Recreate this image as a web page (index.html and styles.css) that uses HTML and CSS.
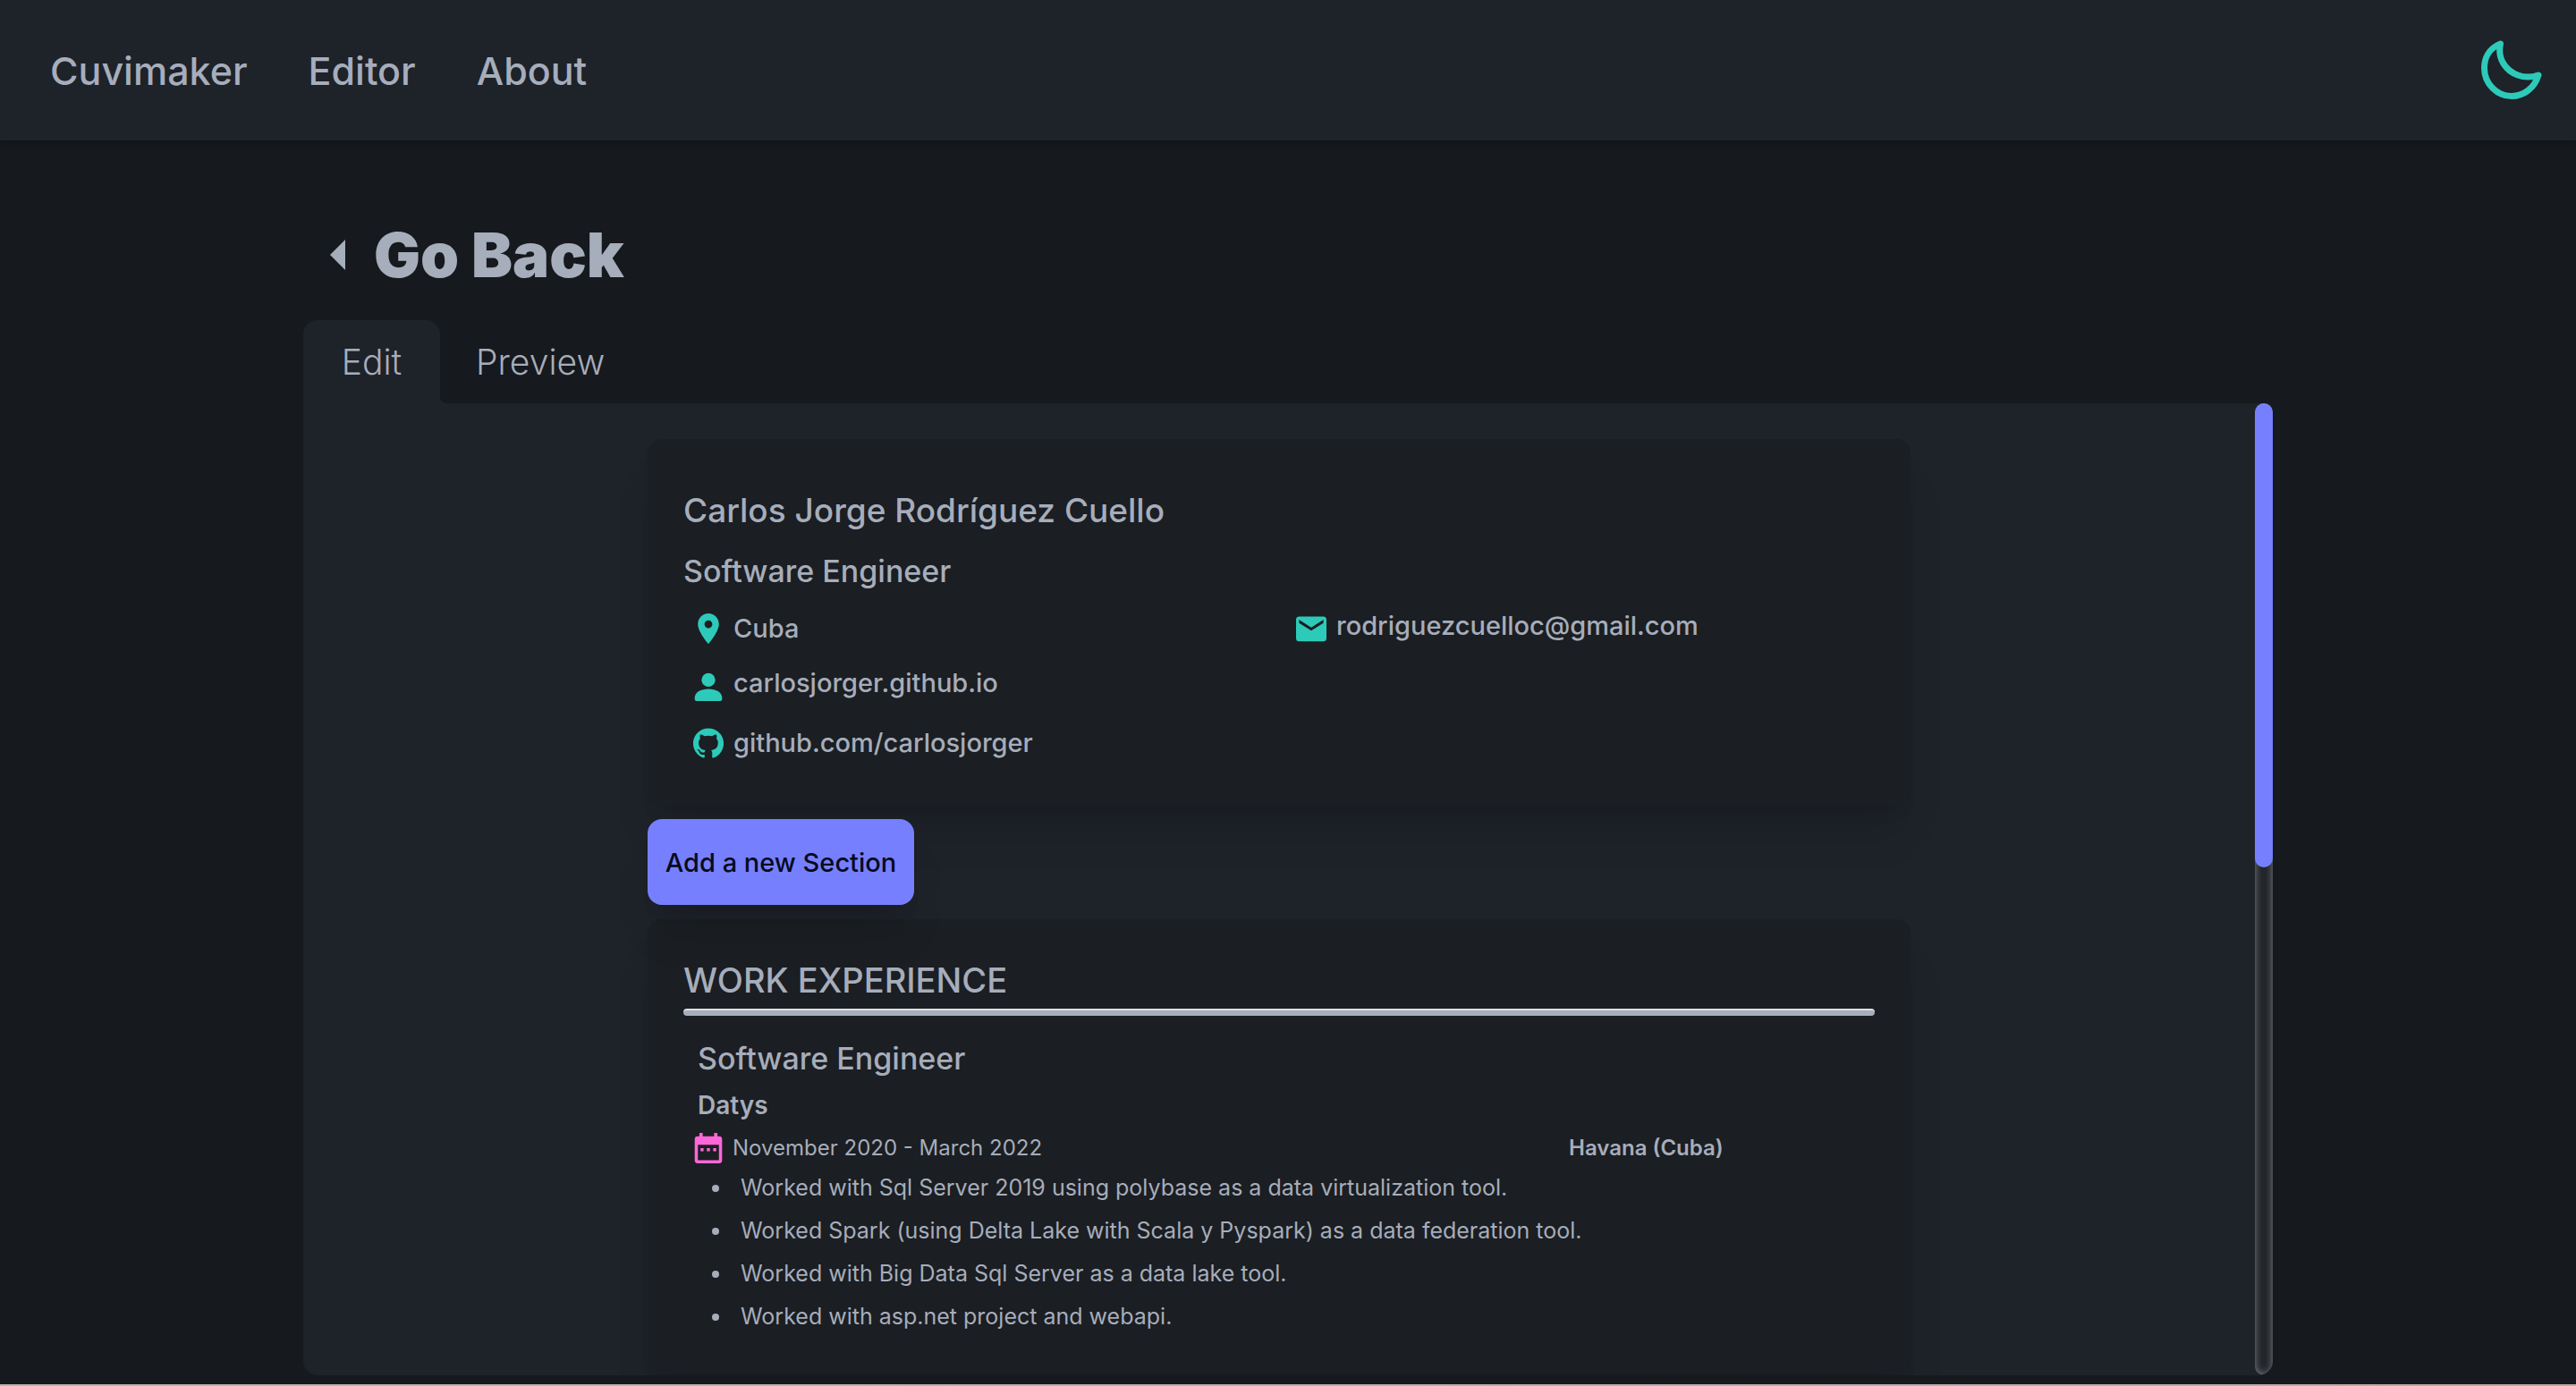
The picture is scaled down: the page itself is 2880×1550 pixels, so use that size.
FILE: index.html
```html
<!DOCTYPE html>
<html lang="en">
<head>
<meta charset="utf-8">
<title>Cuvimaker - Editor</title>
<meta name="viewport" content="width=device-width, initial-scale=1">
<link rel="stylesheet" href="styles.css">
</head>
<body>
<header class="navbar">
  <nav class="nav-links">
    <a href="#home">Cuvimaker</a>
    <a href="#editor">Editor</a>
    <a href="#about">About</a>
  </nav>
  <button class="theme-toggle" type="button" aria-label="Toggle theme">
    <svg viewBox="0 0 68 68" fill="none" stroke="currentColor" stroke-width="7" stroke-linejoin="round" stroke-linecap="round"><path d="M21.500 4C8 9.500 3.500 21 3.500 31C3.500 49 18 62.500 34 62.500C47 62.500 59.500 54 64 39C47 45 32 37 25.500 27C20.500 19.500 20 11 21.500 4Z"/></svg>
  </button>
</header>

<main class="page">
  <a class="back" href="#back">
    <svg class="back-arrow" viewBox="0 0 17 34" fill="currentColor"><path d="M0 17L17 0V34Z"/></svg>
    <h1>Go Back</h1>
  </a>

  <div class="tabs" role="tablist">
    <button class="tab tab-active" type="button" role="tab" aria-selected="true">Edit</button>
    <button class="tab" type="button" role="tab" aria-selected="false">Preview</button>
  </div>

  <div class="panel">
    <div class="content">
      <section class="card profile">
        <h2 class="title">Carlos Jorge Rodríguez Cuello</h2>
        <h3 class="subtitle">Software Engineer</h3>
        <div class="contacts">
          <div class="contact">
            <svg class="icon" viewBox="0 0 24 24"><path d="M12 0C7.400 0 3.700 3.700 3.700 8.400C3.700 14.600 12 24 12 24S20.300 14.600 20.300 8.400C20.300 3.700 16.600 0 12 0ZM12 11.600A3.100 3.100 0 1 1 12 5.400A3.100 3.100 0 0 1 12 11.600Z"/></svg>
            <span>Cuba</span>
          </div>
          <div class="contact">
            <svg class="icon" viewBox="0 0 24 24"><path fill-rule="evenodd" d="M2.500 2.500H21.500Q24 2.500 24 5V19.500Q24 22 21.500 22H2.500Q0 22 0 19.500V5Q0 2.500 2.500 2.500ZM2.400 5V7.500L12 13.600L21.600 7.500V5L12 11.200Z"/></svg>
            <span class="raised">rodriguezcuelloc@gmail.com</span>
          </div>
          <div class="contact">
            <svg class="icon" viewBox="0 0 24 24"><circle cx="12" cy="7.300" r="5.400"/><path d="M1.200 22.500V21.500C1.200 17 6 14.500 12 14.500S22.800 17 22.800 21.500V22.500Q22.800 24 21.300 24H2.700Q1.200 24 1.200 22.500Z"/></svg>
            <a class="raised" href="https://carlosjorger.github.io">carlosjorger.github.io</a>
          </div>
          <div class="contact contact-last">
            <svg class="icon" viewBox="0 0 24 24"><path d="M12 .3a12 12 0 0 0-3.800 23.400c.6.1.8-.3.8-.6v-2c-3.300.7-4-1.600-4-1.600-.6-1.400-1.400-1.800-1.400-1.800-1-.7.1-.7.1-.7 1.200 0 1.900 1.200 1.900 1.200 1 1.800 2.800 1.300 3.500 1 0-.8.400-1.300.7-1.600-2.700-.3-5.500-1.300-5.500-6 0-1.200.5-2.300 1.300-3.100-.2-.4-.6-1.600 0-3.200 0 0 1-.3 3.400 1.200a11.500 11.500 0 0 1 6 0c2.300-1.500 3.300-1.200 3.300-1.200.6 1.600.2 2.800 0 3.200.9.800 1.300 1.900 1.300 3.200 0 4.600-2.800 5.600-5.500 5.900.5.400.9 1 .9 2.200v3.300c0 .3.100.7.800.6A12 12 0 0 0 12 .3"/></svg>
            <a href="https://github.com/carlosjorger">github.com/carlosjorger</a>
          </div>
        </div>
      </section>

      <button class="add-section" type="button">Add a new Section</button>

      <section class="card work">
        <h2 class="title">WORK EXPERIENCE</h2>
        <div class="rule"></div>
        <article class="job">
          <h3 class="subtitle">Software Engineer</h3>
          <h4 class="company">Datys</h4>
          <div class="job-meta">
            <svg class="icon icon-calendar" viewBox="0 0 24 24"><path fill-rule="evenodd" d="M4.900 0H7.500V2.600H16.500V0H19.100V2.600H20.500Q22.800 2.600 22.800 5V21.600Q22.800 24 20.500 24H3.500Q1.200 24 1.200 21.600V5Q1.200 2.600 3.500 2.600H4.900ZM3.700 9.300V21.500H20.300V9.300ZM5.800 12H8.200V14.400H5.800ZM10.800 12H13.200V14.400H10.800ZM15.800 12H18.200V14.400H15.800Z"/></svg>
            <span>November 2020 - March 2022</span>
            <strong>Havana (Cuba)</strong>
          </div>
          <ul class="tasks">
            <li>Worked with Sql Server 2019 using polybase as a data virtualization tool.</li>
            <li>Worked Spark (using Delta Lake with Scala y Pyspark) as a data federation tool.</li>
            <li>Worked with Big Data Sql Server as a data lake tool.</li>
            <li>Worked with asp.net project and webapi.</li>
          </ul>
        </article>
      </section>
    </div>
    <div class="scroll-track"><div class="scroll-thumb"></div></div>
  </div>
</main>
<div class="bottom-edge"></div>
</body>
</html>
```
FILE: styles.css
```css
* {
  box-sizing: border-box;
}

html {
  height: 100%;
}

body {
  margin: 0;
  height: 100%;
  display: flex;
  flex-direction: column;
  overflow: hidden;
  background: #16191d;
  color: #a6adbb;
  font-family: Inter, "Open Sans", sans-serif;
  font-size: 24px;
}

h1, h2, h3, h4 {
  margin: 0;
}

a {
  color: inherit;
  text-decoration: none;
}

button {
  border: 0;
  padding: 0;
  background: none;
  color: inherit;
  font: inherit;
  cursor: pointer;
}

.navbar {
  flex: none;
  height: 157px;
  padding: 0 38px 0 56px;
  display: flex;
  align-items: center;
  justify-content: space-between;
  background: #1e2229;
  box-shadow: 0 2px 8px rgba(0, 0, 0, 0.3);
}

.nav-links {
  display: flex;
  gap: 68px;
  font-size: 43px;
  font-weight: 500;
  line-height: 56px;
}

.theme-toggle {
  width: 68px;
  height: 68px;
  color: #2dcab9;
}

.theme-toggle svg {
  display: block;
}

.page {
  flex: 1;
  min-height: 0;
  width: 100%;
  max-width: 2202px;
  margin: 0 auto;
  padding: 88px 0 10px;
  display: flex;
  flex-direction: column;
}

.back {
  align-self: flex-start;
  display: flex;
  align-items: center;
  gap: 32px;
  padding-left: 30px;
}

.back-arrow {
  width: 17px;
  height: 34px;
}

.back h1 {
  font-size: 69px;
  font-weight: 900;
  line-height: 80px;
}

.tabs {
  display: flex;
  flex: none;
  margin-top: 33px;
}

.tab {
  position: relative;
  min-width: 153px;
  height: 93px;
  padding: 0 40px;
  font-size: 39px;
  font-weight: 300;
}

.tab-active {
  border-radius: 16px 16px 0 0;
  background: #1e2229;
}

.tab-active::after {
  content: "";
  position: absolute;
  left: 100%;
  bottom: 0;
  width: 8px;
  height: 8px;
  background: radial-gradient(circle at 100% 0, transparent 8px, #1e2229 8px);
}

.panel {
  flex: 1;
  min-height: 0;
  display: flex;
  overflow: hidden;
  border-radius: 0 8px 16px 16px;
  background: #1e2229;
}

.content {
  flex: 1;
  overflow: hidden;
  padding: 40px 385px 0;
}

.card {
  padding: 40px;
  border-radius: 16px;
  background: #1b1e22;
  box-shadow: 0 40px 50px -10px rgba(0, 0, 0, 0.1), 0 16px 20px -12px rgba(0, 0, 0, 0.1);
}

.title {
  font-size: 37px;
  font-weight: 500;
  line-height: 56px;
}

.work .title {
  font-size: 38px;
}

.subtitle {
  font-size: 34px;
  font-weight: 500;
  line-height: 48px;
}

.profile {
  height: 409px;
  padding-top: 52px;
}

.profile .subtitle {
  margin-top: 16px;
}

.contacts {
  display: grid;
  grid-template-columns: 674px 1fr;
  grid-auto-rows: 64px;
  padding: 8px 0 0 11px;
}

.contact {
  display: flex;
  align-items: center;
  gap: 11px;
  font-size: 29px;
  font-weight: 500;
  line-height: 40px;
}

.raised {
  padding-bottom: 6px;
}

.contact-last {
  grid-column: 1;
}

.icon {
  flex: none;
  width: 34px;
  height: 34px;
  fill: #2dcab9;
}

.icon-calendar {
  fill: #ff66d9;
}

.add-section {
  display: block;
  position: relative;
  width: 298px;
  height: 96px;
  margin: 16px 0;
  border-radius: 16px;
  background: #7680ff;
  color: #080a1c;
  font-size: 29px;
  font-weight: 500;
  box-shadow: 0 40px 50px -10px rgba(0, 0, 0, 0.1), 0 16px 20px -12px rgba(0, 0, 0, 0.1);
}

.rule {
  height: 8px;
  margin-top: 4px;
  border-top: 2px solid #dcdfe5;
  border-radius: 4px;
  background: #a6adbb;
}

.job {
  padding: 24px 11px 0;
}

.job .subtitle,
.company {
  margin-left: 5px;
}

.company {
  font-size: 28px;
  font-weight: 600;
  line-height: 56px;
}

.job-meta {
  display: grid;
  grid-template-columns: 34px 925px 1fr;
  align-items: center;
  column-gap: 10px;
  line-height: 40px;
}

.job-meta strong {
  font-weight: 600;
}

.tasks {
  margin: 0;
  padding-left: 44px;
  font-size: 25px;
  line-height: 48px;
}

.tasks li {
  padding-left: 9px;
}

.scroll-track {
  flex: none;
  width: 20px;
  border-radius: 10px;
  background: #202429;
  box-shadow: inset 0 0 10px #808488;
}

.scroll-thumb {
  height: 519px;
  border-radius: 10px;
  background: #7680ff;
}

.bottom-edge {
  flex: none;
  height: 2px;
  background: linear-gradient(90deg, #b9b0ad, #b3adab 75%, #b9a99e);
}
```
